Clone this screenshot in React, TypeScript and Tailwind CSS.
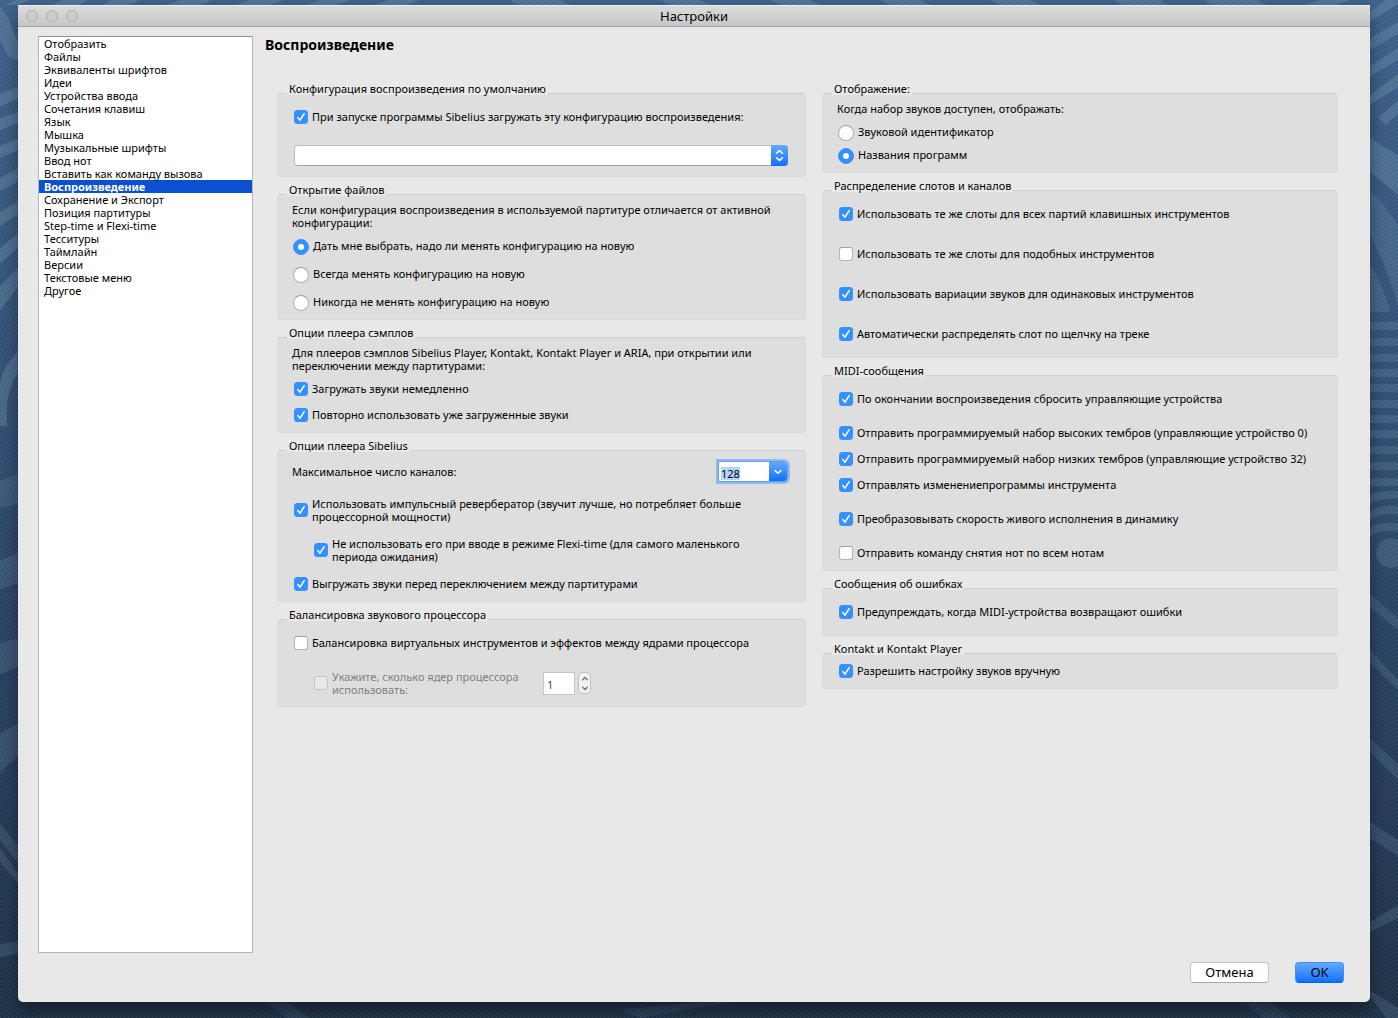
import { useEffect, useRef, useState } from "react";
import type { ReactNode } from "react";

const sections = [
  "Отобразить",
  "Файлы",
  "Эквиваленты шрифтов",
  "Идеи",
  "Устройства ввода",
  "Сочетания клавиш",
  "Язык",
  "Мышка",
  "Музыкальные шрифты",
  "Ввод нот",
  "Вставить как команду вызова",
  "Воспроизведение",
  "Сохранение и Экспорт",
  "Позиция партитуры",
  "Step-time и Flexi-time",
  "Тесситуры",
  "Таймлайн",
  "Версии",
  "Текстовые меню",
  "Другое",
];

function Group({
  id,
  title,
  className,
  children,
}: {
  id: string;
  title: string;
  className: string;
  children: ReactNode;
}) {
  return (
    <section role="group" aria-labelledby={id} className="flex flex-col">
      <h2 id={id} className="z-10 -mb-0.5 ml-2.5 self-start bg-[#e8e8e8] px-0.5">
        {title}
      </h2>
      <div
        className={`flex flex-col rounded-[4px] border border-[#d9d9d9] border-t-[#cecece] bg-[#dedede] ${className}`}
      >
        {children}
      </div>
    </section>
  );
}

function Check({
  children,
  on = false,
  disabled = false,
  multiline = false,
  className = "",
}: {
  children: ReactNode;
  on?: boolean;
  disabled?: boolean;
  multiline?: boolean;
  className?: string;
}) {
  return (
    <label
      className={`flex gap-1 ${multiline ? "items-center" : "items-start"} ${disabled ? "text-[#808080]" : ""} ${className}`}
    >
      <span className="grid shrink-0 place-items-center">
        <input
          type="checkbox"
          defaultChecked={on}
          disabled={disabled}
          className="peer col-start-1 row-start-1 size-3.5 appearance-none rounded-[3px] border border-[#b4b4b4] border-t-[#a0a0a0] bg-white checked:border-[#3b91f8] checked:bg-[#3390ff] disabled:border-[#c3c3c3] disabled:bg-[#e8e8e8]"
        />
        <svg
          viewBox="0 0 14 14"
          className="pointer-events-none invisible col-start-1 row-start-1 size-3.5 peer-checked:visible"
          fill="none"
          stroke="white"
          strokeWidth="1.5"
          strokeLinecap="round"
          strokeLinejoin="round"
        >
          <path d="M3.8 7.6 L6 10.2 L10.2 3.6" />
        </svg>
      </span>
      <span>{children}</span>
    </label>
  );
}

function Radio({ name, children, on = false }: { name: string; children: ReactNode; on?: boolean }) {
  return (
    <label className="flex items-start gap-1">
      <span className="grid shrink-0 place-items-center">
        <input
          type="radio"
          name={name}
          defaultChecked={on}
          className="peer col-start-1 row-start-1 size-4 appearance-none rounded-full border border-[#b0b0b0] border-t-[#9c9c9c] bg-white checked:border-[#3b91f8] checked:bg-[#3390ff]"
        />
        <span className="pointer-events-none invisible col-start-1 row-start-1 size-1.5 rounded-full bg-white peer-checked:visible" />
      </span>
      <span>{children}</span>
    </label>
  );
}

function Chevrons({ className }: { className: string }) {
  return (
    <svg
      viewBox="0 0 17 21"
      className={className}
      fill="none"
      stroke="currentColor"
      strokeWidth="1.5"
      strokeLinecap="round"
      strokeLinejoin="round"
    >
      <path d="M5.5 8.2 L8.5 5.6 L11.5 8.2 M5.5 12.8 L8.5 15.4 L11.5 12.8" />
    </svg>
  );
}

function Wallpaper() {
  return (
    <svg
      className="absolute inset-0 -z-10 size-full"
      viewBox="0 0 1398 1018"
      preserveAspectRatio="none"
      aria-hidden="true"
    >
      <defs>
        <linearGradient id="sky" x1="0" y1="0" x2="0" y2="1">
          <stop offset="0" stopColor="#3f628c" />
          <stop offset="0.3" stopColor="#36557a" />
          <stop offset="0.6" stopColor="#2c4466" />
          <stop offset="1" stopColor="#203348" />
        </linearGradient>
        <pattern id="weave" width="4" height="4" patternUnits="userSpaceOnUse">
          <path d="M0 0h1v1h-1z M2 2h1v1h-1z" fill="#8fb0c4" opacity="0.16" />
          <path d="M2 0h1v1h-1z M0 2h1v1h-1z" fill="#0c1c30" opacity="0.1" />
        </pattern>
      </defs>
      <rect width="1398" height="1018" fill="url(#sky)" />
      <g fill="#7aa0b8" opacity="0.32">
        <path d="M0 6 L8 18 L20 48 L20 62 L8 56 L0 40 Z" />
        <path d="M0 94 L20 86 V97 L0 107 Z M0 118 L20 112 V122 L0 130 Z M0 146 L20 138 V149 L0 158 Z M0 178 L20 168 V180 L0 191 Z M0 212 L20 200 V213 L0 226 Z M0 248 L20 232 V246 L0 264 Z M0 286 L20 266 V284 L0 311 Z" />
        <path d="M20 348 L9 362 Q2 372 0 384 V426 H7 V402 Q10 384 20 370 Z" />
        <path d="M16 0 H30 L18 5 H4 Z M62 0 H88 L80 5 H52 Z M112 0 H140 L128 5 H102 Z M180 0 H212 L200 5 H166 Z M250 0 H284 L270 5 H236 Z M320 0 H350 L336 5 H306 Z M388 0 H420 L406 5 H374 Z" />
        <path d="M510 0 H560 L570 5 H516 Z M660 0 H700 L710 5 H670 Z M770 0 H810 L820 5 H780 Z M880 0 H920 L930 5 H890 Z M990 0 H1030 L1040 5 H1000 Z M1115 0 H1160 L1168 5 H1122 Z M1205 0 H1257 L1266 5 H1210 Z M1305 5 L1320 0 H1350 L1335 5 Z" />
        <path d="M1370 12 L1386 0 H1398 V4 L1370 22 Z M1370 38 L1398 22 V34 L1370 50 Z M1370 66 L1398 48 V60 L1370 77 Z M1370 95 L1398 74 V87 L1370 105 Z M1378 117 L1398 101 V113 L1386 125 Z" />
        <path d="M1370 138 L1398 155 V195 L1370 172 Z" />
        <path d="M1370 190 Q1386 206 1398 225 V305 Q1388 270 1370 234 Z M1370 264 Q1384 286 1390 312 H1370 Z" opacity="0.7" />
      </g>
      <g fill="none" stroke="#6d8ea8" strokeWidth="8" opacity="0.28">
        <path d="M1368 326 h30 M1368 342 h30 M1368 358 h30 M1368 373 h30 M1368 388 h30 M1368 404 h30 M1368 419 h30 M1368 434 h30 M1368 450 h30 M1368 466 h30 M1368 482 h30 M1368 500 Q1380 494 1400 495 M1368 517 Q1382 507 1400 511 M1368 534 Q1380 524 1400 528" />
      </g>
      <g fill="#6d8ea8" opacity="0.24">
        <path d="M0 480 L20 474 V503 L0 508 Z M0 560 L20 553 V583 L0 589 Z M0 644 L20 637 V666 L0 674 Z" />
        <path d="M0 734 L18 723 V756 L0 772 Z M0 824 L20 848 V866 L0 840 Z M0 848 L20 876 V886 L0 862 Z M0 944 L20 941 V953 L0 957 Z" />
        <path d="M1370 594 L1398 618 V630 L1370 607 Z M1370 650 L1398 680 V690 L1370 662 Z M1370 738 L1398 764 V780 L1370 752 Z M1370 822 L1398 840 V856 L1370 838 Z M1370 922 L1398 905 V918 L1370 932 Z M1362 985 L1398 1008 V1018 H1386 Z" />
        <path d="M266 1002 H286 L310 1018 H286 Z M620 1010 L700 1002 H730 L640 1018 Z M1245 1002 H1270 L1290 1018 H1262 Z" opacity="0.6" />
      </g>
      <circle cx="1391" cy="553" r="15" fill="#6d8ea8" opacity="0.3" />
      <rect width="1398" height="1018" fill="url(#weave)" />
    </svg>
  );
}

export default function App() {
  const [active, setActive] = useState("Воспроизведение");
  const channels = useRef<HTMLInputElement>(null);

  useEffect(() => {
    channels.current?.focus();
    channels.current?.select();
  }, []);

  return (
    <div className="relative isolate flex min-h-screen pt-[5px] pr-7 pb-4 pl-[18px] font-['Lucida_Grande','Noto_Sans',sans-serif] text-[11px] leading-[13px] text-black">
      <Wallpaper />
      <div className="flex flex-1 flex-col rounded-b-[5px] bg-[#e8e8e8] shadow-[0_8px_16px_rgba(0,0,0,0.4)]">
        <header className="grid h-[22px] shrink-0 grid-cols-[1fr_auto_1fr] items-center border-t border-b border-t-[#efefef] border-b-[#a5a5a5] bg-linear-to-b from-[#dcdcdc] to-[#c6c6c6] px-2">
          <div className="flex gap-2">
            <button type="button" aria-label="Закрыть" className="size-3 rounded-full border border-[#b0b0b0] bg-[#cbcbcb]" />
            <button type="button" aria-label="Свернуть" className="size-3 rounded-full border border-[#b0b0b0] bg-[#cbcbcb]" />
            <button type="button" aria-label="Развернуть" className="size-3 rounded-full border border-[#b0b0b0] bg-[#cbcbcb]" />
          </div>
          <h1 className="text-[13px] leading-4">Настройки</h1>
        </header>

        <div className="flex flex-1 pt-[9px] pl-5">
          <nav className="mb-[49px] w-[215px] shrink-0 border border-[#b5b5b5] border-t-[#8e8e8e] bg-white">
            <ul>
              {sections.map((s) => (
                <li key={s}>
                  <button
                    type="button"
                    onClick={() => setActive(s)}
                    className={`block w-full pl-[5px] text-left ${s === active ? "bg-[#0a50d0] font-bold text-white" : ""}`}
                  >
                    {s}
                  </button>
                </li>
              ))}
            </ul>
          </nav>

          <main className="flex flex-1 flex-col pl-3">
            <h2 className="text-sm leading-[18px] font-bold">Воспроизведение</h2>
            <div className="mt-7 grid grid-cols-[529fr_516fr] items-start gap-4 pr-8 pl-3">
              <div className="flex flex-col gap-1.5">
                <Group id="defaults" title="Конфигурация воспроизведения по умолчанию" className="pt-4 pr-[17px] pb-2.5 pl-4">
                  <Check on>При запуске программы Sibelius загружать эту конфигурацию воспроизведения:</Check>
                  <div className="mt-[21px] grid">
                    <select
                      aria-label="Конфигурация воспроизведения"
                      className="col-start-1 row-start-1 h-[21px] appearance-none rounded-[4px] border border-[#bcbcbc] border-b-[#a2a2a2] bg-white px-2"
                    >
                      <option></option>
                    </select>
                    <Chevrons className="pointer-events-none col-start-1 row-start-1 h-[21px] w-[17px] justify-self-end rounded-r-[4px] bg-linear-to-b from-[#62a9fb] to-[#0b70fb] text-white" />
                  </div>
                </Group>

                <Group id="opening" title="Открытие файлов" className="px-[15px] pt-2 pb-2">
                  <p className="-ml-px">
                    Если конфигурация воспроизведения в используемой партитуре отличается от активной
                    <br />
                    конфигурации:
                  </p>
                  <div className="mt-2.5 flex flex-col gap-3">
                    <Radio name="opening" on>Дать мне выбрать, надо ли менять конфигурацию на новую</Radio>
                    <Radio name="opening">Всегда менять конфигурацию на новую</Radio>
                    <Radio name="opening">Никогда не менять конфигурацию на новую</Radio>
                  </div>
                </Group>

                <Group id="samples" title="Опции плеера сэмплов" className="px-3.5 pt-2 pb-2.5">
                  <p>
                    Для плееров сэмплов Sibelius Player, Kontakt, Kontakt Player и ARIA, при открытии или
                    <br />
                    переключении между партитурами:
                  </p>
                  <div className="mt-2.5 flex flex-col gap-3 pl-0.5">
                    <Check on>Загружать звуки немедленно</Check>
                    <Check on>Повторно использовать уже загруженные звуки</Check>
                  </div>
                </Group>

                <Group id="player" title="Опции плеера Sibelius" className="pt-2.5 pr-[17px] pb-2.5 pl-4">
                  <div className="-ml-0.5 flex items-center justify-between">
                    <label htmlFor="channels">Максимальное число каналов:</label>
                    <div className="flex h-[21px] w-[70px] overflow-hidden rounded-r-[4px] border border-[#5e9fe9] ring-2 ring-[#8fbcf0]">
                      <input
                        id="channels"
                        ref={channels}
                        defaultValue="128"
                        className="w-0 flex-1 bg-white pt-1 pl-0.5 outline-none selection:bg-[#b2d4fd] selection:text-black"
                      />
                      <button
                        type="button"
                        aria-label="Показать варианты"
                        className="grid w-[18px] place-items-center bg-linear-to-b from-[#62a9fb] to-[#0b70fb]"
                      >
                        <svg viewBox="0 0 10 6" className="h-1.5 w-2.5" fill="none" stroke="white" strokeWidth="1.5" strokeLinecap="round" strokeLinejoin="round">
                          <path d="M2 1.5 L5 4.3 L8 1.5" />
                        </svg>
                      </button>
                    </div>
                  </div>
                  <Check on multiline className="mt-[15px]">
                    Использовать импульсный ревербератор (звучит лучше, но потребляет больше
                    <br />
                    процессорной мощности)
                  </Check>
                  <Check on multiline className="mt-3.5 ml-5">
                    Не использовать его при вводе в режиме Flexi-time (для самого маленького
                    <br />
                    периода ожидания)
                  </Check>
                  <Check on className="mt-3.5">Выгружать звуки перед переключением между партитурами</Check>
                </Group>

                <Group id="cpu" title="Балансировка звукового процессора" className="px-4 pt-4 pb-2.5">
                  <Check>Балансировка виртуальных инструментов и эффектов между ядрами процессора</Check>
                  <div className="mt-5 ml-5 flex items-center">
                    <Check disabled multiline className="w-[229px]">
                      Укажите, сколько ядер процессора
                      <br />
                      использовать:
                    </Check>
                    <input
                      aria-label="Число ядер процессора"
                      defaultValue="1"
                      disabled
                      className="h-[23px] w-8 border border-[#c6c6c6] bg-white pt-0.5 pl-[3px] text-[#4a4a4a]"
                    />
                    <div className="ml-[3px] flex h-[22px] w-[13px] flex-col rounded-[5px] border border-[#c0c0c0] bg-[#f1f1f1] text-[#777777]">
                      <button type="button" disabled aria-label="Больше" className="grid flex-1 place-items-center">
                        <svg viewBox="0 0 8 5" className="h-[5px] w-2" fill="none" stroke="currentColor" strokeWidth="1.4" strokeLinecap="round">
                          <path d="M1.7 3.7 L4 1.4 L6.3 3.7" />
                        </svg>
                      </button>
                      <button type="button" disabled aria-label="Меньше" className="grid flex-1 place-items-center">
                        <svg viewBox="0 0 8 5" className="h-[5px] w-2" fill="none" stroke="currentColor" strokeWidth="1.4" strokeLinecap="round">
                          <path d="M1.7 1.3 L4 3.6 L6.3 1.3" />
                        </svg>
                      </button>
                    </div>
                  </div>
                </Group>
              </div>

              <div className="flex flex-col gap-1.5">
                <Group id="display" title="Отображение:" className="px-[15px] pt-2 pb-2">
                  <p className="-ml-px">Когда набор звуков доступен, отображать:</p>
                  <div className="mt-2.5 flex flex-col gap-[7px]">
                    <Radio name="display">Звуковой идентификатор</Radio>
                    <Radio name="display" on>Названия программ</Radio>
                  </div>
                </Group>

                <Group id="slots" title="Распределение слотов и каналов" className="gap-[26px] px-4 py-4">
                  <Check on>Использовать те же слоты для всех партий клавишных инструментов</Check>
                  <Check>Использовать те же слоты для подобных инструментов</Check>
                  <Check on>Использовать вариации звуков для одинаковых инструментов</Check>
                  <Check on>Автоматически распределять слот по щелчку на треке</Check>
                </Group>

                <Group id="midi" title="MIDI-сообщения" className="gap-5 px-4 pt-4 pb-2.5">
                  <Check on>По окончании воспроизведения сбросить управляющие устройства</Check>
                  <div className="flex flex-col gap-3">
                    <Check on>Отправить программируемый набор высоких тембров (управляющие устройство 0)</Check>
                    <Check on>Отправить программируемый набор низких тембров (управляющие устройство 32)</Check>
                    <Check on>Отправлять изменениепрограммы инструмента</Check>
                  </div>
                  <Check on>Преобразовывать скорость живого исполнения в динамику</Check>
                  <Check>Отправить команду снятия нот по всем нотам</Check>
                </Group>

                <Group id="errors" title="Сообщения об ошибках" className="px-4 py-4">
                  <Check on>Предупреждать, когда MIDI-устройства возвращают ошибки</Check>
                </Group>

                <Group id="kontakt" title="Kontakt и Kontakt Player" className="px-4 py-2.5">
                  <Check on>Разрешить настройку звуков вручную</Check>
                </Group>
              </div>
            </div>

            <div className="mt-auto flex justify-end gap-[26px] pr-[26px] pb-[19px] text-[13px] leading-4">
              <button type="button" className="h-[21px] w-[79px] rounded-[4px] border border-[#c2c2c2] border-b-[#a6a6a6] bg-white pb-0.5">
                Отмена
              </button>
              <button type="button" className="h-[21px] w-[49px] rounded-[4px] border border-[#3d92f7] border-b-[#0a60e8] bg-linear-to-b from-[#62a9fb] to-[#0b70fb] pb-0.5">
                OK
              </button>
            </div>
          </main>
        </div>
      </div>
    </div>
  );
}
